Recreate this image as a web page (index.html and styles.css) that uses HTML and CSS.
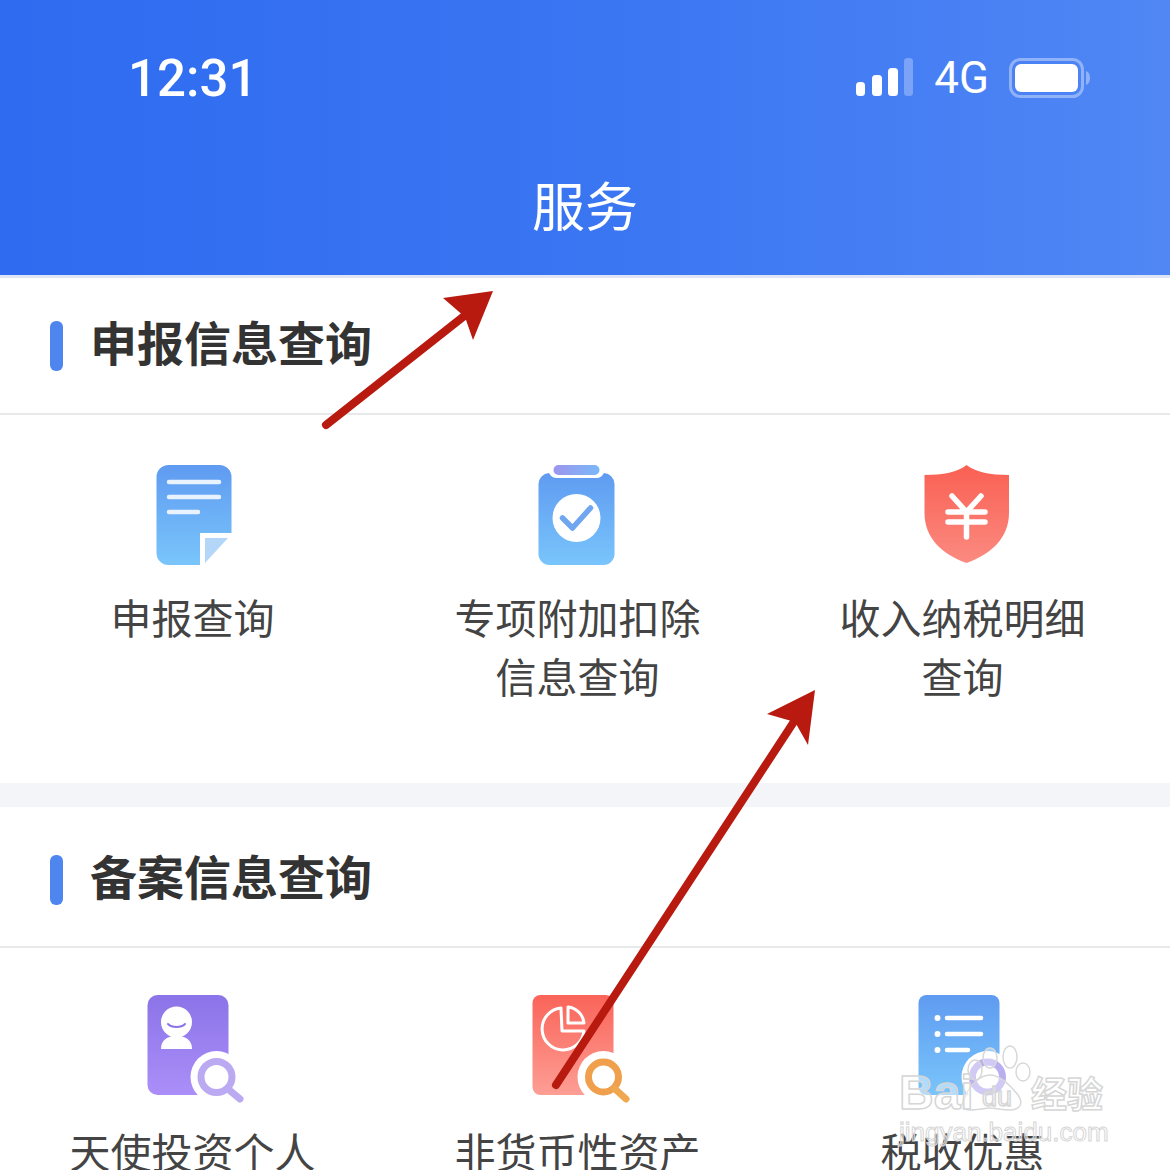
FILE: index.html
```html
<!DOCTYPE html>
<html lang="zh-CN">
<head>
    <meta charset="UTF-8">
    <meta name="viewport" content="width=device-width, initial-scale=1.0">
    <title>服务</title>
    <link rel="stylesheet" href="styles.css">
</head>
<body>
    <header class="top-bar">
        <div class="status-bar">
            <span class="clock">12:31</span>
            <div class="status-icons">
                <svg class="signal" width="58" height="40" viewBox="0 0 58 40">
                    <rect x="0" y="24" width="9" height="14" rx="3.5" fill="#fff"/>
                    <rect x="16" y="17" width="10" height="21" rx="3.5" fill="#fff"/>
                    <rect x="32" y="10" width="10" height="28" rx="3.5" fill="#fff"/>
                    <rect x="48" y="0" width="9" height="38" rx="3.5" fill="#7ba4f8"/>
                </svg>
                <span class="network">4G</span>
                <svg class="battery" width="82" height="40" viewBox="0 0 82 40">
                    <rect x="1.5" y="1.5" width="72" height="37" rx="10" fill="none" stroke="#8fb2f9" stroke-width="3"/>
                    <rect x="6" y="6" width="63" height="28" rx="6" fill="#fff"/>
                    <path d="M77 13c3 1 4 4 4 7s-1 6-4 7z" fill="#8fb2f9"/>
                </svg>
            </div>
        </div>
        <h1 class="page-title">服务</h1>
    </header>

    <section class="group">
        <div class="group-head">
            <h2 class="group-title">申报信息查询</h2>
        </div>
        <div class="grid grid-first">
            <div class="item">
                <svg class="icon" width="110" height="110" viewBox="0 0 110 110">
                    <path d="M18.5 12a12 12 0 0 1 12-12h51a12 12 0 0 1 12 12v56H62v32H30.5a12 12 0 0 1-12-12z" fill="url(#blue1)"/>
                    <path d="M67 73h23L67 98z" fill="#b4d6f8"/>
                    <g stroke="#e9f3ff" stroke-width="4.5" stroke-linecap="round">
                        <path d="M31 17h50M31 32h50M31 47h29"/>
                    </g>
                </svg>
                <p class="item-label">申报查询</p>
            </div>
            <div class="item">
                <svg class="icon" width="110" height="110" viewBox="0 0 110 110">
                    <path d="M26 8c1.500 3 4 5 8 5h39c4 0 6.500-2 8-5a11 11 0 0 1 10.500 11v70a11 11 0 0 1-11 11h-54a11 11 0 0 1-11-11V19a11 11 0 0 1 10.500-11z" fill="url(#blue1)"/>
                    <rect x="30.5" y="0" width="46" height="10" rx="5" fill="url(#lilac)"/>
                    <circle cx="53.5" cy="53" r="24" fill="#fff"/>
                    <path d="M39.500 53l10 10 18-20" fill="none" stroke="#6fa6ef" stroke-width="5.500" stroke-linecap="round" stroke-linejoin="round"/>
                </svg>
                <p class="item-label">专项附加扣除<br>信息查询</p>
            </div>
            <div class="item">
                <svg class="icon" width="110" height="110" viewBox="0 0 110 110">
                    <path d="M58.5 0c9 7 24 10 42.500 10v38c0 24-17 41-42.500 50C33 89 16.500 72 16.500 48V10C35 10 50 7 58.500 0z" fill="url(#red1)"/>
                    <g fill="none" stroke="#fff" stroke-width="5.500" stroke-linecap="round">
                        <path d="M44 31l14.500 16L73 31M58.500 47v25M40 47h37M40 57h37"/>
                    </g>
                </svg>
                <p class="item-label">收入纳税明细<br>查询</p>
            </div>
        </div>
    </section>

    <section class="group">
        <div class="group-head">
            <h2 class="group-title">备案信息查询</h2>
        </div>
        <div class="grid">
            <div class="item">
                <svg class="icon" width="110" height="110" viewBox="0 0 110 110">
                    <rect x="9.5" y="0" width="81" height="100" rx="10" fill="url(#purple)"/>
                    <circle cx="38.5" cy="27" r="15.5" fill="#fff"/>
                    <path d="M23 54c0-9 6-13 15.500-13S54 45 54 54z" fill="#fff"/>
                    <path d="M30 29c4 4 13 4 17 0" fill="none" stroke="#8b72e6" stroke-width="2" stroke-linecap="round"/>
                    <circle cx="78.5" cy="82" r="26" fill="#fff"/>
                    <circle cx="78.5" cy="82" r="15.5" fill="#fff" stroke="#bba9f2" stroke-width="7"/>
                    <path d="M90 94l12 10" stroke="#bba9f2" stroke-width="7" stroke-linecap="round"/>
                </svg>
                <p class="item-label">天使投资个人</p>
            </div>
            <div class="item">
                <svg class="icon" width="110" height="110" viewBox="0 0 110 110">
                    <rect x="9.5" y="0" width="81" height="100" rx="8" fill="url(#red2)"/>
                    <g fill="none" stroke="#fff" stroke-width="3" stroke-linejoin="round">
                        <path d="M38 13a21 21 0 1 0 23 23H39z"/>
                        <path d="M45 12a18 18 0 0 1 16 16H45z"/>
                    </g>
                    <circle cx="80.5" cy="82" r="26" fill="#fff"/>
                    <circle cx="80.5" cy="82" r="15" fill="#fff" stroke="#f0a04c" stroke-width="7"/>
                    <path d="M92 94l11 10" stroke="#f0a850" stroke-width="7" stroke-linecap="round"/>
                </svg>
                <p class="item-label">非货币性资产</p>
            </div>
            <div class="item">
                <svg class="icon" width="110" height="110" viewBox="0 0 110 110">
                    <rect x="10.5" y="0" width="81" height="100" rx="8" fill="url(#blue1)"/>
                    <g fill="#fff">
                        <circle cx="29.5" cy="23" r="3"/>
                        <circle cx="29.5" cy="39" r="3"/>
                        <circle cx="29.5" cy="55" r="3"/>
                    </g>
                    <g stroke="#fff" stroke-width="4.5" stroke-linecap="round">
                        <path d="M39 23h34M39 39h34M39 55h21"/>
                    </g>
                    <circle cx="79.5" cy="82" r="26" fill="#fff"/>
                    <circle cx="79.5" cy="82" r="15" fill="#fff" stroke="#b9aef0" stroke-width="7"/>
                </svg>
                <p class="item-label">税收优惠</p>
            </div>
        </div>
    </section>

    <svg class="defs" width="0" height="0">
        <defs>
            <linearGradient id="blue1" x1="0" y1="0" x2="0" y2="1">
                <stop offset="0" stop-color="#5f9bf1"/>
                <stop offset="1" stop-color="#79c5fb"/>
            </linearGradient>
            <linearGradient id="lilac" x1="0" y1="0" x2="1" y2="0">
                <stop offset="0" stop-color="#9c96ee"/>
                <stop offset="1" stop-color="#7ab8f8"/>
            </linearGradient>
            <linearGradient id="red1" x1="0" y1="0" x2="0" y2="1">
                <stop offset="0" stop-color="#fa6053"/>
                <stop offset="1" stop-color="#fb8a80"/>
            </linearGradient>
            <linearGradient id="red2" x1="0" y1="0" x2="0" y2="1">
                <stop offset="0" stop-color="#fa6459"/>
                <stop offset="1" stop-color="#fd9e95"/>
            </linearGradient>
            <linearGradient id="purple" x1="0" y1="0" x2="0" y2="1">
                <stop offset="0" stop-color="#8b74e8"/>
                <stop offset="1" stop-color="#ab8ef8"/>
            </linearGradient>
        </defs>
    </svg>

    <!-- hand drawn arrows on top of the screenshot -->
    <svg class="arrows" width="1170" height="1170" viewBox="0 0 1170 1170">
        <g fill="#b81a10">
            <path d="M326 425L468 313" stroke="#b81a10" stroke-width="8" stroke-linecap="round"/>
            <path d="M493 291L473 340 465 317 443 298z"/>
            <path d="M556 1085L797 717" stroke="#b81a10" stroke-width="8" stroke-linecap="round"/>
            <path d="M815 690L808 745 795 722 767 714z"/>
        </g>
    </svg>

    <div class="watermark">
        <svg class="paw" width="72" height="68" viewBox="0 0 72 68">
            <g fill="rgba(255,255,255,.35)" stroke="#d8d8d8" stroke-width="1.5">
                <ellipse cx="15" cy="25" rx="7" ry="10"/>
                <ellipse cx="30" cy="13" rx="7" ry="10"/>
                <ellipse cx="50" cy="12" rx="7" ry="11"/>
                <ellipse cx="63" cy="27" rx="7" ry="9"/>
                <path d="M6 50c4-10 14-20 24-20s20 10 28 20c6 8 2 15-8 15-8 0-14-2-20-2s-12 2-20 2c-8 0-9-8-4-15z"/>
            </g>
        </svg>
        <span class="wm-bai">Bai</span>
        <span class="wm-du">du</span>
        <span class="wm-cn">经验</span>
        <span class="wm-url">jingyan.baidu.com</span>
    </div>
</body>
</html>
```

FILE: styles.css
```css
html, body {
    margin: 0;
    height: 1170px;
    overflow: hidden;
}

body {
    position: relative;
    background-color: white;
    font-family: "Noto Sans CJK SC", "Noto Sans", sans-serif;
}

.top-bar {
    height: 275px;
    border-bottom: 3px solid #e0e5f5;
    background: linear-gradient(90deg, #2e6bf0 0%, #3a75f2 50%, #5087f5 100%);
    color: white;
    text-align: center;
}

.status-bar {
    display: flex;
    justify-content: space-between;
    align-items: center;
    height: 156px;
    padding: 0 79px 0 128px;
    font-family: Roboto, "Liberation Sans", sans-serif;
}

.clock {
    font-size: 51px;
    font-weight: 500;
}

.status-icons {
    display: flex;
    align-items: center;
}

.network {
    margin: 0 20px;
    font-size: 44px;
}

.signal,
.battery {
    display: block;
}

.page-title {
    margin: 0;
    font-size: 53px;
    font-weight: 400;
    line-height: 96px;
}

.group + .group {
    border-top: 24px solid #f3f5f8;
}

.group-head {
    display: flex;
    align-items: center;
    gap: 27px;
    height: 135px;
    border-bottom: 2px solid #e8e9eb;
    padding-left: 50px;
}

.group-head::before {
    content: "";
    width: 13px;
    height: 50px;
    border-radius: 6px;
    background-color: #4f85ee;
}

.group + .group .group-head {
    height: 133px;
    padding-top: 6px;
}

.group-title {
    margin: 0 0 9px;
    color: #333;
    font-size: 47px;
    font-weight: 700;
    line-height: 50px;
}

.grid {
    display: grid;
    grid-template-columns: repeat(3, 385px);
    padding-top: 47px;
}

.grid-first {
    height: 318px;
    padding-top: 50px;
}

.item {
    text-align: center;
}

.icon {
    display: block;
    margin: 0 auto;
    overflow: visible;
}

.item-label {
    margin: 12px 0 0;
    color: #444;
    font-size: 41px;
    line-height: 59px;
}

.group + .group .item-label {
    margin-top: 16px;
}

.defs {
    position: absolute;
}

.arrows {
    position: absolute;
    top: 0;
    left: 0;
}

.watermark {
    position: absolute;
    top: 1040px;
    left: 890px;
    width: 230px;
    height: 110px;
    color: rgba(255, 255, 255, 0.45);
    font-family: "Liberation Sans", Arial, sans-serif;
    -webkit-text-stroke: 1.5px #d6d6d6;
}

.paw {
    position: absolute;
    top: 5px;
    left: 70px;
}

.wm-bai,
.wm-du,
.wm-cn,
.wm-url {
    position: absolute;
    white-space: nowrap;
}

.wm-bai {
    top: 25px;
    left: 9px;
    font-size: 48px;
    font-weight: 700;
}

.wm-du {
    top: 42px;
    left: 92px;
    font-size: 27px;
}

.wm-cn {
    top: 26px;
    left: 141px;
    font-family: "Noto Sans CJK SC", sans-serif;
    font-size: 36px;
    font-weight: 700;
}

.wm-url {
    top: 77px;
    left: 9px;
    font-size: 26px;
    -webkit-text-stroke-width: 1px;
}
```
